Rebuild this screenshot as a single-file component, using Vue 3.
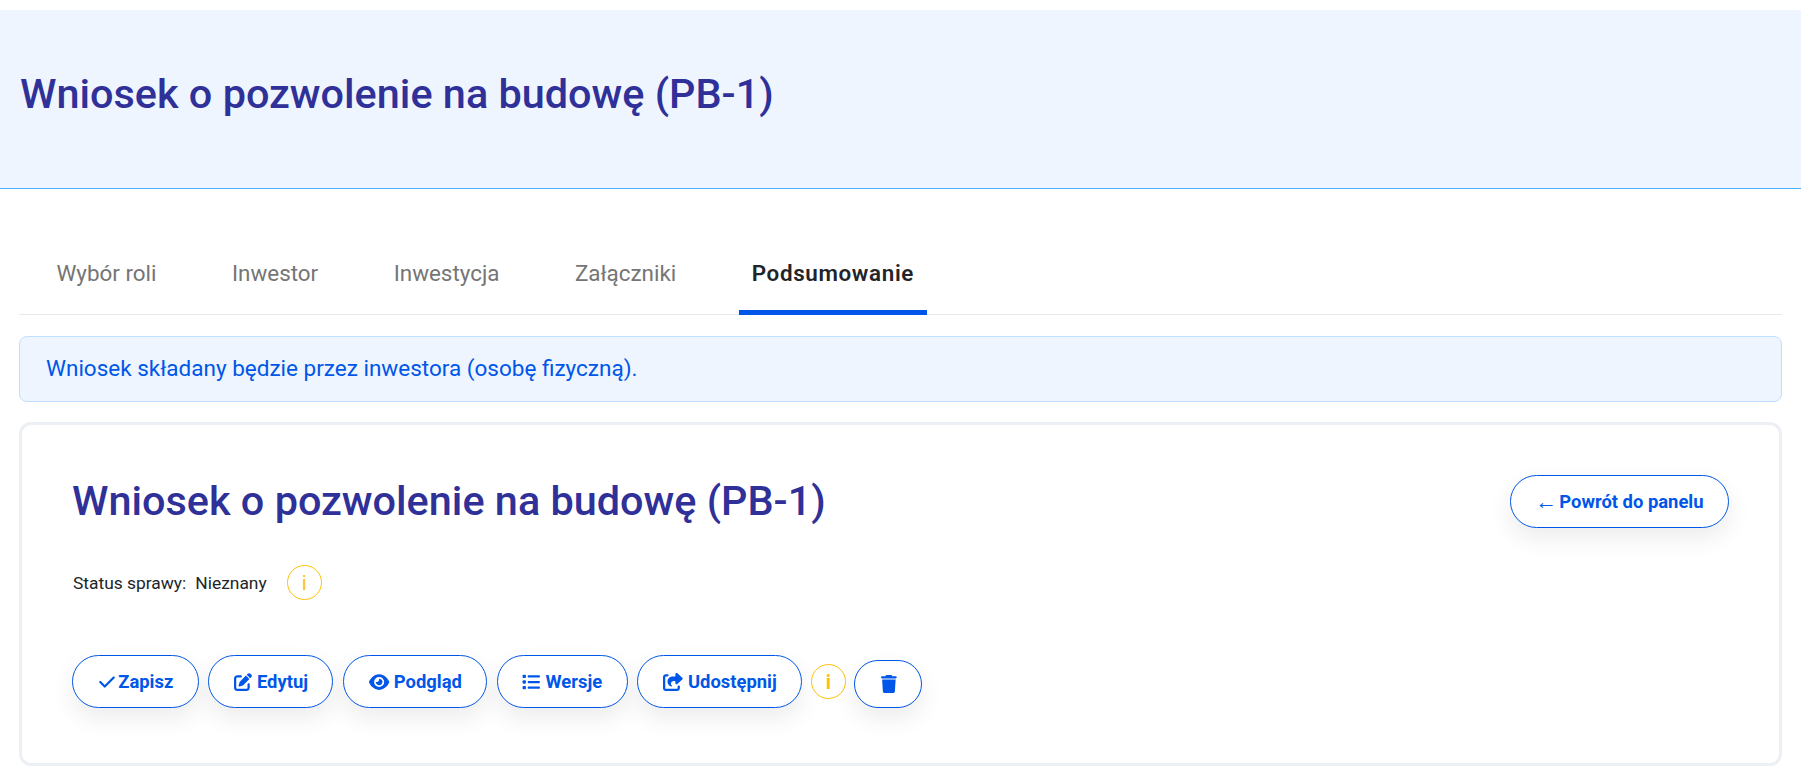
<template>
  <div class="page">
    <header class="top">
      <h1>Wniosek o pozwolenie na budowę (PB-1)</h1>
    </header>

    <nav class="tabs">
      <a v-for="t in tabs" :key="t" class="tab" :class="{ on: t === active }">{{ t }}</a>
    </nav>

    <div class="alert">Wniosek składany będzie przez inwestora (osobę fizyczną).</div>

    <section class="card">
      <div class="head">
        <h2>Wniosek o pozwolenie na budowę (PB-1)</h2>
        <button class="btn"><span class="arrow">←</span> Powrót do panelu</button>
      </div>

      <div class="status">
        <span>Status sprawy:</span>
        <span class="val">Nieznany</span>
        <span class="info thin">i</span>
      </div>

      <div class="actions">
        <button v-for="b in buttons" :key="b.label" class="btn">
          <svg class="ico" :viewBox="b.box"><path :d="b.d" /></svg>
          {{ b.label }}
        </button>
        <span class="info">i</span>
        <button class="btn del">
          <svg class="ico" viewBox="0 0 448 512"><path d="M135.2 17.7L128 32H32C14.3 32 0 46.3 0 64S14.3 96 32 96H416c17.7 0 32-14.3 32-32s-14.3-32-32-32H320l-7.2-14.3C307.4 6.8 296.3 0 284.2 0H163.8c-12.1 0-23.2 6.8-28.6 17.7zM416 128H32L53.2 467c1.6 25.3 22.6 45 47.9 45H346.9c25.3 0 46.3-19.7 47.9-45L416 128z" /></svg>
        </button>
      </div>
    </section>
  </div>
</template>

<script setup>
const tabs = ['Wybór roli', 'Inwestor', 'Inwestycja', 'Załączniki', 'Podsumowanie'];
const active = 'Podsumowanie';

const buttons = [
  {
    label: 'Zapisz',
    box: '0 0 448 512',
    d: 'M470.6 105.4c12.5 12.5 12.5 32.8 0 45.3l-256 256c-12.5 12.5-32.8 12.5-45.3 0l-128-128c-12.5-12.5-12.5-32.8 0-45.3s32.8-12.5 45.3 0L192 338.7 425.4 105.4c12.5-12.5 32.8-12.5 45.3 0z',
  },
  {
    label: 'Edytuj',
    box: '0 0 512 512',
    d: 'M471.6 21.7c-21.9-21.9-57.3-21.9-79.2 0L362.3 51.7l97.9 97.9 30.1-30.1c21.9-21.9 21.9-57.3 0-79.2L471.6 21.7zm-299.2 220c-6.1 6.1-10.8 13.6-13.5 21.9l-29.6 88.8c-2.9 8.6-.6 18.1 5.8 24.6s15.9 8.7 24.6 5.8l88.8-29.6c8.2-2.7 15.7-7.4 21.9-13.5L437.7 172.3 339.7 74.3 172.4 241.7zM96 64C43 64 0 107 0 160V416c0 53 43 96 96 96H352c53 0 96-43 96-96V320c0-17.7-14.3-32-32-32s-32 14.3-32 32v96c0 17.7-14.3 32-32 32H96c-17.7 0-32-14.3-32-32V160c0-17.7 14.3-32 32-32h96c17.7 0 32-14.3 32-32s-14.3-32-32-32H96z',
  },
  {
    label: 'Podgląd',
    box: '0 0 576 512',
    d: 'M288 32c-80.8 0-145.5 36.8-192.6 80.6C48.6 156 17.3 208 2.5 243.7c-3.3 7.9-3.3 16.7 0 24.6C17.3 304 48.6 356 95.4 399.4C142.5 443.2 207.2 480 288 480s145.5-36.8 192.6-80.6c46.8-43.5 78.1-95.4 93-131.1c3.3-7.9 3.3-16.7 0-24.6c-14.9-35.7-46.2-87.7-93-131.1C433.5 68.8 368.8 32 288 32zM144 256a144 144 0 1 1 288 0 144 144 0 1 1 -288 0zm144-64c0 35.3-28.7 64-64 64c-7.1 0-13.9-1.2-20.3-3.3c-5.5-1.8-11.9 1.6-11.7 7.4c.3 6.9 1.3 13.8 3.2 20.7c13.7 51.2 66.4 81.6 117.6 67.9s81.6-66.4 67.9-117.6c-11.1-41.5-47.8-69.4-88.6-71.1c-5.8-.2-9.2 6.1-7.4 11.7c2.1 6.4 3.3 13.2 3.3 20.3z',
  },
  {
    label: 'Wersje',
    box: '0 0 512 512',
    d: 'M40 48C26.7 48 16 58.7 16 72v48c0 13.3 10.7 24 24 24H88c13.3 0 24-10.7 24-24V72c0-13.3-10.7-24-24-24H40zM192 64c-17.7 0-32 14.3-32 32s14.3 32 32 32H480c17.7 0 32-14.3 32-32s-14.3-32-32-32H192zm0 160c-17.7 0-32 14.3-32 32s14.3 32 32 32H480c17.7 0 32-14.3 32-32s-14.3-32-32-32H192zm0 160c-17.7 0-32 14.3-32 32s14.3 32 32 32H480c17.7 0 32-14.3 32-32s-14.3-32-32-32H192zM16 232v48c0 13.3 10.7 24 24 24H88c13.3 0 24-10.7 24-24V232c0-13.3-10.7-24-24-24H40c-13.3 0-24 10.7-24 24zM40 368c-13.3 0-24 10.7-24 24v48c0 13.3 10.7 24 24 24H88c13.3 0 24-10.7 24-24V392c0-13.3-10.7-24-24-24H40z',
  },
  {
    label: 'Udostępnij',
    box: '0 0 576 512',
    d: 'M352 224H305.5c-45 0-81.5 36.5-81.5 81.5c0 22.3 10.3 34.3 19.2 40.5c6.8 4.7 12.8 12 12.8 20.3c0 9.8-8 17.8-17.8 17.8h-2.5c-2.4 0-4.8-.4-7.1-1.4C210.8 374.8 128 333.4 128 240c0-79.5 64.5-144 144-144h80V34.7C352 15.5 367.5 0 386.7 0c8.6 0 16.8 3.2 23.2 8.9L548.1 133.3c7.6 6.8 11.9 16.5 11.9 26.7s-4.3 19.9-11.9 26.7l-139 125.1c-5.9 5.3-13.5 8.2-21.4 8.2H384c-17.7 0-32-14.3-32-32V224zM80 96c-8.8 0-16 7.2-16 16V432c0 8.8 7.2 16 16 16H400c8.8 0 16-7.2 16-16V384c0-17.7 14.3-32 32-32s32 14.3 32 32v48c0 44.2-35.8 80-80 80H80c-44.2 0-80-35.8-80-80V112C0 67.8 35.8 32 80 32h48c17.7 0 32 14.3 32 32s-14.3 32-32 32H80z',
  },
];
</script>

<style>
body {
  background: #fff;
}
</style>

<style scoped>
.page {
  padding-top: 10px;
  font-family: Roboto, sans-serif;
  color: #212529;
}

.top {
  height: 168px;
  padding: 0 0 10px 20px;
  background: #eef5ff;
  border-bottom: 1px solid #4db0ff;
  display: flex;
  align-items: center;
}

h1, h2 {
  margin: 0;
  font-size: 41.4px;
  font-weight: 500;
  color: #303099;
  line-height: 48px;
}

h2 {
  margin-top: 2px;
}

.tabs {
  margin: 43px 19px 0;
  height: 82px;
  display: flex;
  border-bottom: 1px solid #e8eaee;
}

.tab {
  margin-right: 50.5px;
  padding: 4px 12.5px 0;
  display: flex;
  align-items: center;
  height: 83px;
  box-sizing: border-box;
  font-size: 22.4px;
  color: #757575;
  border-bottom: 5px solid transparent;
}

.tab:first-child {
  margin-left: 25px;
}

.tab.on {
  color: #212529;
  font-weight: 600;
  letter-spacing: 0.65px;
  border-bottom-color: #0056e8;
}

.alert {
  margin: 21px 19px 0;
  height: 66px;
  box-sizing: border-box;
  display: flex;
  align-items: center;
  padding: 0 0 2px 26px;
  background: #eef5ff;
  border: 1px solid #bfdfff;
  border-radius: 8px;
  font-size: 22.5px;
  color: #0056e8;
}

.card {
  margin: 20px 19px 0;
  height: 344px;
  box-sizing: border-box;
  padding: 50px 50px 0;
  border: 3px solid #eceff3;
  border-radius: 12px;
}

.head {
  display: flex;
  justify-content: space-between;
  align-items: flex-start;
  height: 53px;
}

.status {
  margin-top: 37px;
  padding-left: 1px;
  display: flex;
  align-items: center;
  font-size: 17.4px;
}

.status .val {
  margin-left: 9px;
  margin-right: 20px;
}

.info {
  width: 35px;
  height: 35px;
  box-sizing: border-box;
  border: 1px solid #ffc107;
  border-radius: 50%;
  display: flex;
  align-items: center;
  justify-content: center;
  font-size: 20px;
  font-weight: 700;
  color: #ffc107;
}

.info.thin {
  font-weight: 400;
}

.actions {
  margin-top: 55px;
  display: flex;
  align-items: center;
  gap: 9.6px;
}

.actions .info {
  margin-left: -1px;
  margin-right: -1px;
}

.btn {
  height: 53px;
  padding: 0 24.5px;
  display: inline-flex;
  align-items: center;
  justify-content: center;
  gap: 5px;
  background: #fff;
  border: 1px solid #0056e8;
  border-radius: 27px;
  font-family: Roboto, sans-serif;
  font-size: 18.4px;
  font-weight: 700;
  color: #0056e8;
  box-shadow: 0 10px 25px rgba(0, 0, 0, 0.08);
}

.arrow {
  margin-right: -3px;
  font-family: "Liberation Sans", sans-serif;
  font-size: 22px;
  font-weight: 400;
  line-height: 1;
}

.ico {
  height: 18px;
  fill: #0056e8;
  overflow: visible;
}

.btn.del {
  width: 68px;
  height: 48px;
  align-self: flex-end;
  padding: 0;
}
</style>
